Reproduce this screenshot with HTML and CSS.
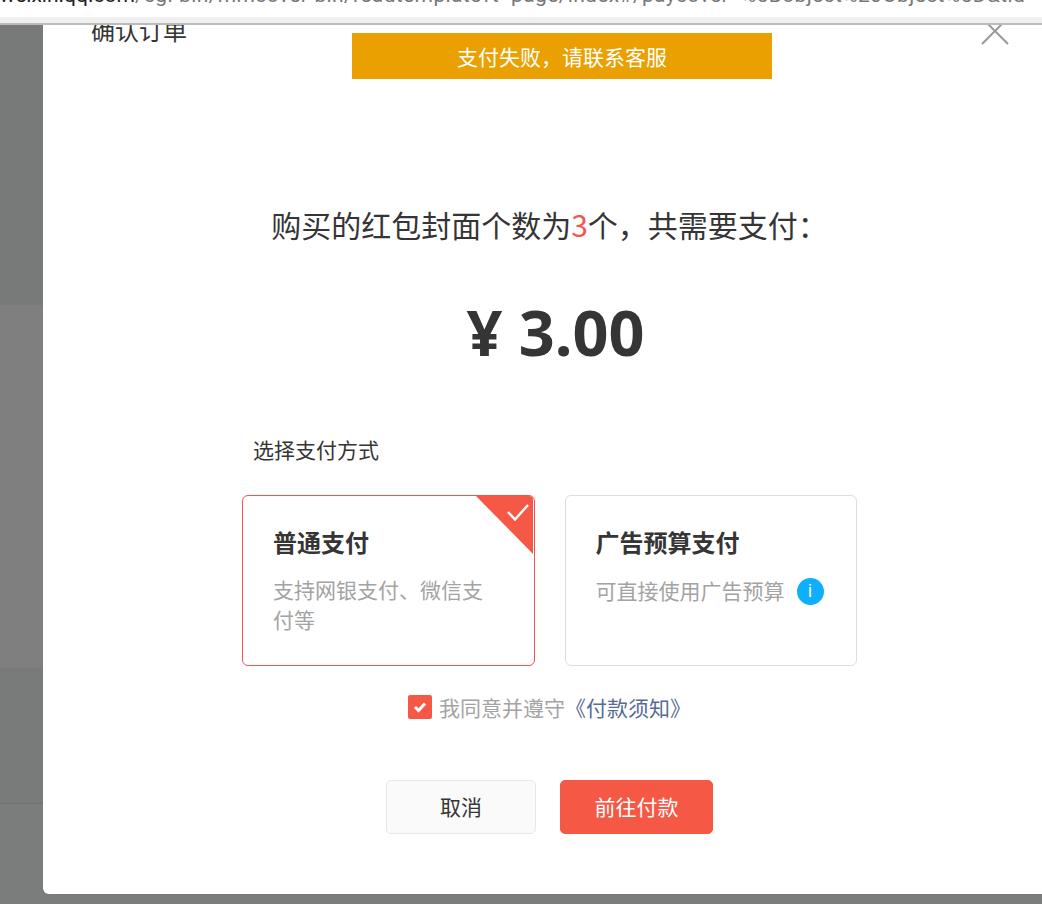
FILE: index.html
```html
<!DOCTYPE html>
<html lang="zh-CN">
<head>
    <meta charset="UTF-8">
    <title>确认订单</title>
    <link rel="stylesheet" href="styles.css">
</head>
<body>
    <div class="address-bar">
        <div class="url"><span class="host">r.weixin.qq.com</span>/cgi-bin/mmcover-bin/readtemplate?t=page/index#/paycover=%5Bobject%20Object%5D&amp;tid</div>
    </div>

    <div class="stage">
        <div class="backdrop">
            <div class="band band-top"></div>
            <div class="band band-mid"></div>
            <div class="band band-low"></div>
            <div class="band band-bottom"></div>
        </div>

        <div class="modal">
            <div class="modal-header">
                <h2 class="modal-title">确认订单</h2>
                <svg class="close-icon" width="28" height="28" viewBox="0 0 28 28">
                    <path d="M1 1 L27 27 M27 1 L1 27" stroke="#999" stroke-width="2" fill="none"/>
                </svg>
            </div>

            <div class="toast">支付失败，请联系客服</div>

            <p class="summary">购买的红包封面个数为<span class="count">3</span>个，共需要支付：</p>
            <div class="amount">¥ 3.00</div>

            <div class="pay-section">
                <div class="pay-label">选择支付方式</div>
                <div class="pay-options">
                    <div class="pay-card selected">
                        <svg class="corner-check" width="22" height="17" viewBox="0 0 22 17">
                            <path d="M1 8 L8 15.5 L21 1" stroke="#fff" stroke-width="2.4" fill="none"/>
                        </svg>
                        <h3>普通支付</h3>
                        <p>支持网银支付、微信支付等</p>
                    </div>
                    <div class="pay-card">
                        <h3>广告预算支付</h3>
                        <p>可直接使用广告预算<span class="info-icon">i</span></p>
                    </div>
                </div>
            </div>

            <div class="agree">
                <span class="checkbox">
                    <svg width="14" height="12" viewBox="0 0 14 12">
                        <path d="M2 6 L5.5 9.5 L12 2.5" stroke="#fff" stroke-width="3" fill="none"/>
                    </svg>
                </span>
                <span>我同意并遵守</span><a class="agree-link" href="#">《付款须知》</a>
            </div>

            <div class="actions">
                <a class="btn btn-default" href="#">取消</a>
                <a class="btn btn-primary" href="#">前往付款</a>
            </div>
        </div>
    </div>
</body>
</html>
```

FILE: styles.css
```css
html, body {
    margin: 0;
    height: 100%;
}
body {
    width: 1042px;
    height: 904px;
    display: flex;
    flex-direction: column;
    overflow: hidden;
    font-family: "Noto Sans CJK SC", "Noto Sans", sans-serif;
    color: #353535;
    background-color: #7b7d7c;
}
a {
    text-decoration: none;
}

/* clipped browser chrome at the top */
.address-bar {
    height: 17px;
    flex: none;
    overflow: hidden;
    background-color: #fff;
    border-bottom: 6px solid #f0f0f0;
    box-shadow: 0 2px 0 #bbb;
    position: relative;
    z-index: 2;
    margin-bottom: 2px;
}
.url {
    margin-top: -19px;
    margin-left: -12px;
    white-space: nowrap;
    font-family: "Roboto", sans-serif;
    font-size: 21px;
    line-height: 28px;
    letter-spacing: 0.37px;
    color: #777;
}
.host {
    color: #222;
    letter-spacing: 0;
}

.stage {
    flex: 1;
    position: relative;
    overflow: hidden;
}
.backdrop {
    display: flex;
    flex-direction: column;
    height: 100%;
}
.band-top {
    height: 280px;
    background-color: #787a79;
}
.band-mid {
    height: 363px;
    background-color: #7f7f7f;
}
.band-low {
    height: 135px;
    background-color: #797b7a;
    border-bottom: 1px solid #6e706f;
}
.band-bottom {
    flex: 1;
    background-color: #7b7d7c;
}

.modal {
    position: absolute;
    left: 43px;
    top: 0;
    width: 1013px;
    height: 869px;
    background-color: #fff;
    border-radius: 0 0 6px 6px;
    display: flex;
    flex-direction: column;
    align-items: center;
}
.modal-header {
    align-self: stretch;
    height: 0;
    display: flex;
    justify-content: space-between;
    padding: 0 47px 0 48px;
}
.modal-title {
    margin: -13px 0 0;
    font-size: 24px;
    font-weight: normal;
    line-height: 36px;
}
.close-icon {
    margin-top: -8px;
}

.toast {
    position: absolute;
    left: 309px;
    top: 8px;
    width: 420px;
    height: 46px;
    background-color: #eaa000;
    color: #fff;
    font-size: 21px;
    line-height: 46px;
    text-align: center;
}

.summary {
    margin: 178px 0 0;
    font-size: 30px;
    line-height: 42px;
}
.count {
    color: #fa5151;
}
.amount {
    margin-top: 45px;
    padding-left: 12px;
    font-family: "Noto Sans", sans-serif;
    font-size: 63px;
    font-weight: bold;
    line-height: 84px;
}

.pay-section {
    width: 615px;
    margin-top: 60px;
}
.pay-label {
    margin-left: 11px;
    font-size: 21px;
    line-height: 30px;
}
.pay-options {
    display: flex;
    gap: 30px;
    margin-top: 31px;
}
.pay-card {
    position: relative;
    overflow: hidden;
    box-sizing: border-box;
    width: 293px;
    height: 171px;
    padding: 28px 30px 0;
    border: 1px solid #dedede;
    border-radius: 6px;
}
.pay-card.selected {
    border-color: #fa5151;
}
.pay-card.selected::before {
    content: "";
    position: absolute;
    top: 0;
    right: 1px;
    border-style: solid;
    border-width: 0 57px 58px 0;
    border-color: transparent #f55845 transparent transparent;
}
.corner-check {
    position: absolute;
    top: 8px;
    right: 5px;
}
.pay-card h3 {
    margin: 0;
    font-size: 24px;
    font-weight: bold;
    line-height: 36px;
}
.pay-card p {
    margin: 14px 0 0;
    max-width: 215px;
    font-size: 21px;
    line-height: 30px;
    color: #a3a3a3;
}
.pay-card:not(.selected) p {
    max-width: none;
    display: flex;
    align-items: center;
}
.info-icon {
    width: 27px;
    height: 27px;
    margin-left: 12px;
    margin-top: 4px;
    border-radius: 50%;
    background-color: #10aeff;
    color: #fff;
    font-family: "Liberation Sans", sans-serif;
    font-size: 18px;
    line-height: 27px;
    text-align: center;
}

.agree {
    display: flex;
    align-items: center;
    margin-top: 26px;
    font-size: 21px;
    line-height: 30px;
    color: #a3a3a3;
}
.checkbox {
    width: 24px;
    height: 24px;
    margin-right: 7px;
    border-radius: 2px;
    background-color: #f55845;
    display: flex;
    align-items: center;
    justify-content: center;
}
.agree-link {
    color: #576b95;
}

.actions {
    display: flex;
    gap: 24px;
    margin-top: 58px;
}
.btn {
    box-sizing: border-box;
    height: 54px;
    border-radius: 5px;
    font-size: 21px;
    line-height: 50px;
    text-align: center;
}
.btn-default {
    width: 150px;
    background-color: #fafafa;
    border: 1px solid #e4e8eb;
    color: #353535;
}
.btn-primary {
    width: 153px;
    background-color: #f55845;
    border: 1px solid #f55845;
    color: #fff;
}
```
